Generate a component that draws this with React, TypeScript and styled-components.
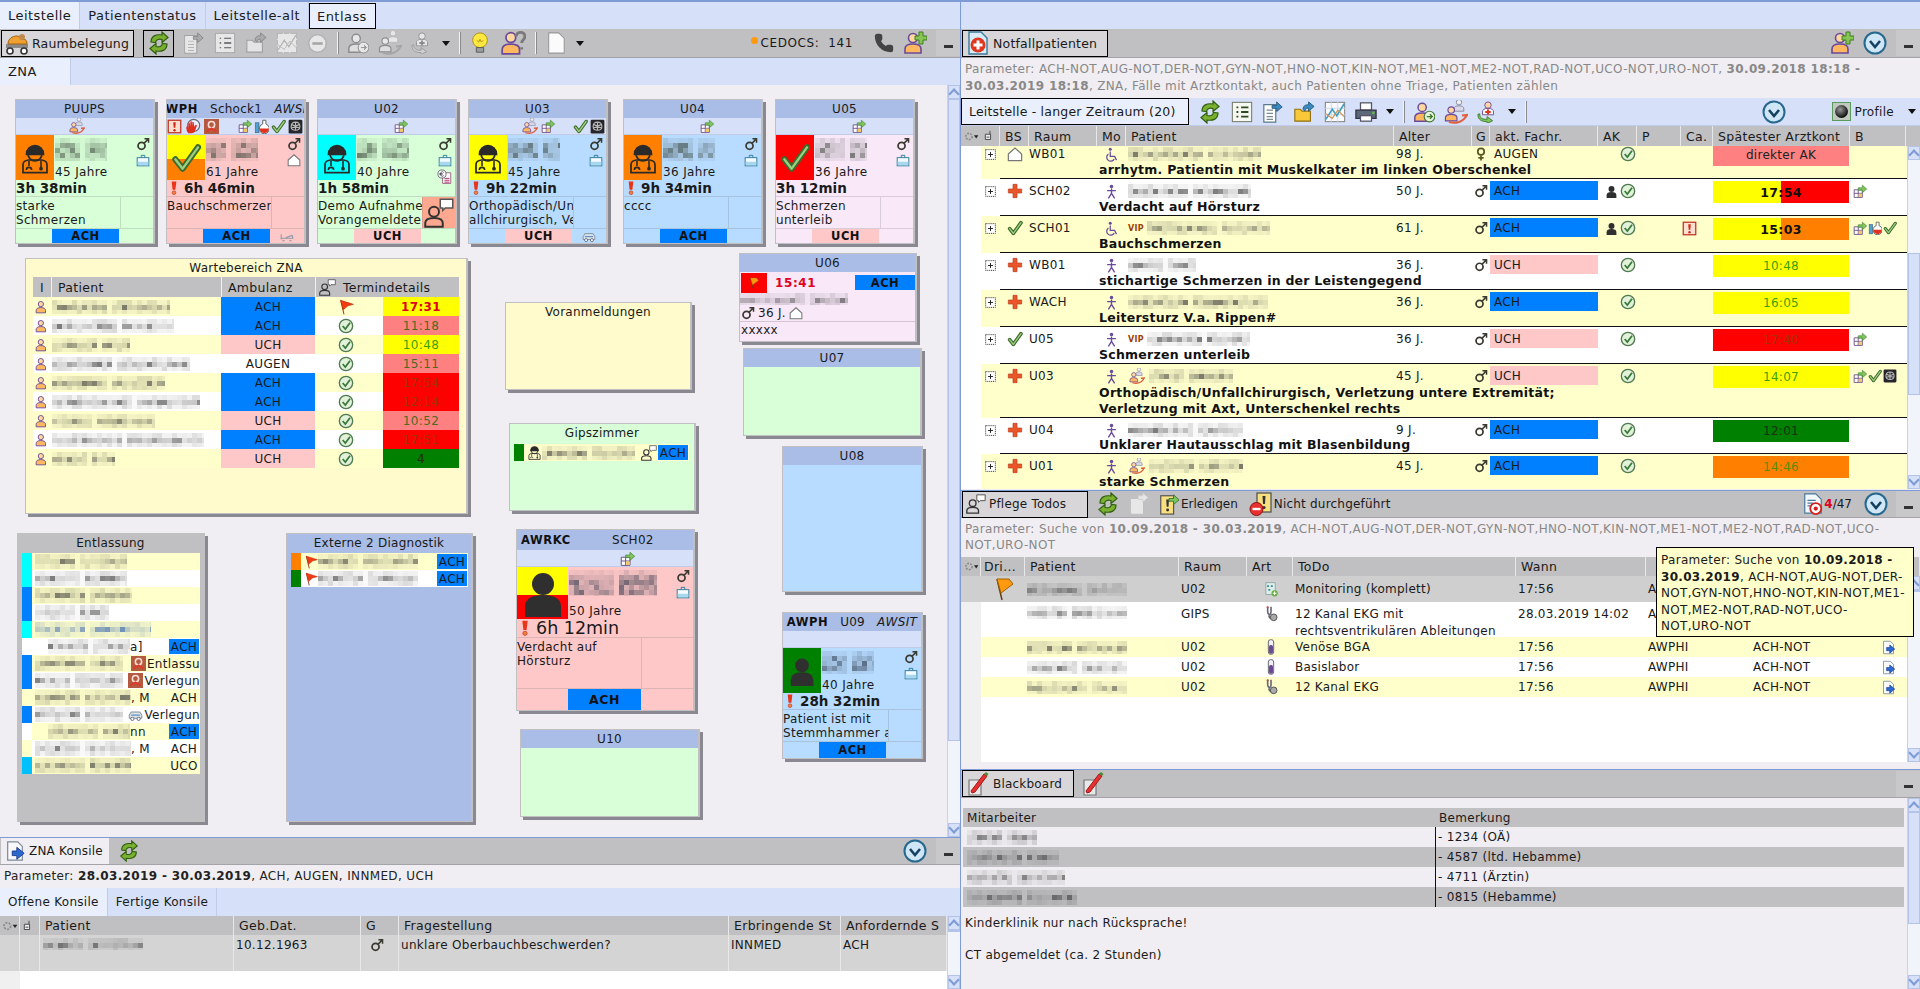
import React from 'react';
import styled, { createGlobalStyle } from 'styled-components';
import { Phone } from 'lucide-react';

const ACH = '#0080ff';
const PINK = '#ffc8c8';
const YEL = '#ffffcc';
const GREY = '#c0bfc2';
const BAND = '#a9bde6';
const PALE = '#d6e0f8';
const PAGE = '#f0eef2';

const Global = createGlobalStyle`
  html, body { margin: 0; padding: 0; height: 100%; overflow: hidden; background: ${PAGE}; }
  body, button { font-family: "DejaVu Sans", "Liberation Sans", sans-serif; font-size: 12px; color: #1a1a1a; }
  #root { height: 989px; width: 1920px; overflow: hidden; }
  * { box-sizing: border-box; }
`;

/* ---------- icons ---------- */
const person = (a = '#ffd8a0', b = '#ffb860', c = '#6a4a9a') => (
  <>
    <circle cx="10" cy="7" r="4.5" fill={a} stroke={c} strokeWidth="1.6" />
    <path d="M2 22v-4q0-5 8-5t8 5v4z" fill={b} stroke={c} strokeWidth="1.6" />
  </>
);
const gthick = (d: string, w = 5.5) => (
  <>
    <path d={d} fill="none" stroke="#3f6a2c" strokeWidth={w} strokeLinecap="round" strokeLinejoin="round" />
    <path d={d} fill="none" stroke="#9ad080" strokeWidth={w / 2.6} strokeLinecap="round" strokeLinejoin="round" />
  </>
);
const docBase = (
  <path d="M4 2h11l5 5v15H4z" fill="#f8f8f8" stroke="#7a8a9a" strokeWidth="1.3" />
);

const ICONS: Record<string, React.ReactNode> = {
  male: (
    <>
      <circle cx="9.5" cy="15" r="6" fill="none" stroke="#3a3a30" strokeWidth="3" />
      <path d="M14 10.5 21 3.5M14.5 3h7v7" fill="none" stroke="#3a3a30" strokeWidth="2.6" />
    </>
  ),
  female: (
    <>
      <circle cx="12" cy="8" r="5.5" fill="none" stroke="#5a5a20" strokeWidth="3" />
      <path d="M12 14v9M7.5 18.5h9" fill="none" stroke="#5a5a20" strokeWidth="3" />
    </>
  ),
  bag: (
    <>
      <path d="M9 8V4h6v4" fill="none" stroke="#2a7a9a" strokeWidth="1.6" />
      <rect x="2" y="8" width="20" height="14" fill="#f4fbff" stroke="#2a7a9a" strokeWidth="1.6" />
      <rect x="3" y="15" width="18" height="6" fill="#a8d8f0" />
    </>
  ),
  house: <path d="M2 12 12 3l10 9v10H2z" fill="#fff" stroke="#777" strokeWidth="1.8" />,
  check: gthick('M4 13l5.5 7L21 4'),
  bigcheck: gthick('M4 13l5.5 7L21 4', 4.6),
  okc: (
    <>
      <circle cx="12" cy="12" r="10" fill="#e2f2da" stroke="#4f7a4f" strokeWidth="2" />
      <path d="M7 12l4 4.5L18 7" fill="none" stroke="#3a7a3a" strokeWidth="2.6" />
    </>
  ),
  cross: <path d="M9 2h6v7h7v6h-7v7H9v-7H2V9h7z" fill="#e8562a" stroke="#c03a18" strokeWidth="1" />,
  walk: (
    <>
      <circle cx="12" cy="4" r="2.8" fill="#6a4a9a" />
      <path d="M12 7v8M5 10.5h14M12 15l-5 8M12 15l5 8" fill="none" stroke="#6a4a9a" strokeWidth="2.2" />
    </>
  ),
  wheel: (
    <>
      <circle cx="10" cy="3.5" r="2.4" fill="#6a4a9a" />
      <path d="M10 7v8h7l3 6M7 11a6.5 6.5 0 1 0 9.5 8.5" fill="none" stroke="#6a4a9a" strokeWidth="2" />
    </>
  ),
  flag: (
    <>
      <path d="M4 2l5 21" stroke="#a03010" strokeWidth="1.5" />
      <path d="M4 2l19 6-8 2-7 6z" fill="#f03c10" stroke="#c02808" />
    </>
  ),
  flago: (
    <>
      <path d="M5 2l5 21" stroke="#604010" strokeWidth="1.5" />
      <path d="M5 2h12l4 5-12 9z" fill="#ff9a10" stroke="#a06000" />
    </>
  ),
  exbox: (
    <>
      <rect x="2" y="2" width="20" height="20" fill="#ffe0d0" stroke="#c03020" strokeWidth="2" />
      <path d="M10 5h4l-.7 9h-2.6z" fill="#d02818" />
      <circle cx="12" cy="18" r="1.9" fill="#d02818" />
    </>
  ),
  ex: (
    <>
      <path d="M8 1h8l-1.6 14H9.600z" fill="#e83418" />
      <circle cx="12" cy="20" r="3.2" fill="#f08040" stroke="#c03020" />
    </>
  ),
  gift: (
    <>
      <path d="M2 10h14v13H2z" fill="#fff" stroke="#6a4a8a" strokeWidth="1.5" />
      <path d="M2 16h14M9 10v13" stroke="#6a4a8a" strokeWidth="1.5" />
      <path d="M9.800 16.500h5.500v5.800H9.800z" fill="#f0c860" />
      <path d="M9 6.500h7V2l7.500 6.500L16 15v-4.500H9z" fill="#80c460" stroke="#3a7a2a" />
    </>
  ),
  flask: (
    <>
      <rect x="2" y="6" width="6" height="16" fill="#50a0d0" stroke="#406080" />
      <path d="M14 2h5v6a8 8 0 1 1-5 0z" fill="#fff" stroke="#555" strokeWidth="1.4" />
      <path d="M9 15h15a7 7 0 0 1-15 0z" fill="#e03020" />
    </>
  ),
  xray: (
    <>
      <rect x="1" y="1" width="22" height="22" rx="2" fill="#26262a" />
      <path d="M12 5c-5 0-7 3-7 7 0 3 2 6 7 6s7-3 7-6c0-4-2-7-7-7zM12 5v13M6 9l5 2M18 9l-5 2M6 14l5-1M18 14l-5-1" fill="none" stroke="#b8b8b8" strokeWidth="1.8" />
    </>
  ),
  hand: (
    <>
      <circle cx="13" cy="11" r="9" fill="#eef" stroke="#667" strokeWidth="1.8" />
      <path d="M5 23c-3-3-3-7-3-10l2-1 1 3V7l2 0 1 5V5h2l1 7V6h2l1 7 2-3 2 1-3 9c-1 2-3 3-5 3z" fill="#e03020" />
    </>
  ),
  hurt: (
    <>
      <rect x="0" y="0" width="24" height="24" fill="#b45a40" />
      <circle cx="12" cy="9" r="5" fill="none" stroke="#ffe0d8" strokeWidth="2.5" />
      <path d="M4 20l8-5 8 5" fill="none" stroke="#e03828" strokeWidth="3" />
    </>
  ),
  bed: <path d="M2 9v9M2 16h20l-1-5-6 2-5 2M4 20h4M16 20h4" fill="none" stroke="#8a9aa8" strokeWidth="1.8" />,
  amb: (
    <>
      <path d="M2 18v-5l3-5h14l3 5v5z" fill="#dce4ea" stroke="#7a8a98" strokeWidth="1.5" />
      <path d="M5 13h14" stroke="#6090c0" strokeWidth="2" />
      <circle cx="7" cy="19" r="2.6" fill="#fff" stroke="#667" strokeWidth="1.5" />
      <circle cx="17" cy="19" r="2.6" fill="#fff" stroke="#667" strokeWidth="1.5" />
    </>
  ),
  euro: (
    <>
      <path d="M9 6h13v17H9z" fill="#fff" stroke="#8a3a6a" strokeWidth="1.2" />
      <path d="M12 15h8M12 18h8M12 21h8" stroke="#a02050" strokeWidth="1.4" />
      <circle cx="8" cy="8" r="6.500" fill="#fff" stroke="#556" strokeWidth="1.3" />
      <path d="M11 5.500a3.500 3.500 0 1 0 0 5M4 7.200h5M4 9h5" fill="none" stroke="#334" strokeWidth="1.1" />
    </>
  ),
  talk: (
    <>
      <circle cx="8" cy="11" r="4" fill="none" stroke="#333" strokeWidth="1.6" />
      <path d="M1 23v-3q0-4 7-4t7 4v3z" fill="none" stroke="#333" strokeWidth="1.6" />
      <path d="M13 1h10v7h-6l-2 2V8h-2z" fill="#fff" stroke="#555" strokeWidth="1.2" />
    </>
  ),
  doctor: (
    <>
      <path d="M5 9a7 7 0 0 1 14 0v1H5z" fill="#2a2a2a" />
      <circle cx="12" cy="9" r="5.200" fill="none" stroke="#2a2a2a" strokeWidth="1.3" />
      <path d="M3 23v-6q0-3 4-3.500h10q4 .5 4 3.500v6z" fill="none" stroke="#2a2a2a" strokeWidth="1.3" />
      <path d="M7.500 14v4M16.500 14v5M5.500 21a2 2 0 0 1 4 0" fill="none" stroke="#2a2a2a" strokeWidth="1.2" />
      <circle cx="16.500" cy="20" r="1.400" fill="#2a2a2a" />
    </>
  ),
  sil: (
    <>
      <circle cx="12" cy="7.500" r="5.500" fill="#2f2f2f" />
      <path d="M3 24v-5q0-6 9-6t9 6v5z" fill="#2f2f2f" />
    </>
  ),
  person: person(),
  personplus: (
    <>
      {person()}
      <path d="M14 6h4V2h4v4h4v4h-4v4h-4v-4h-4z" transform="translate(-2 -1)" fill="#86c454" stroke="#3f7f20" />
    </>
  ),
  personq: (
    <>
      {person()}
      <path d="M15 6c0-5 8-5 8 0 0 3-3 3-3 6M20 16v2" fill="none" stroke="#7a7a7a" strokeWidth="2.6" />
    </>
  ),
  personarrow: (
    <>
      {person()}
      <circle cx="18" cy="17" r="5.800" fill="#e4f4dc" stroke="#4a7a3a" strokeWidth="1.3" />
      <path d="M15 17h6M18.500 14.500 21 17l-2.500 2.500" fill="none" stroke="#3a7a2a" strokeWidth="1.5" />
    </>
  ),
  people: (
    <>
      <g transform="translate(9 -2) scale(.6)">{person('#f0f0f0', '#d8d8e8', '#8a8aa0')}</g>
      <g transform="translate(0 5) scale(.72)">{person()}</g>
      <path d="M5 22c7 2 14 0 18-7l-5 .5" fill="none" stroke="#e06040" strokeWidth="2.2" />
    </>
  ),
  docperson: (
    <>
      <circle cx="12" cy="4.500" r="3.500" fill="#ffd8a0" stroke="#6a4a9a" />
      <path d="M6 15v-3q0-4 6-4t6 4v3z" fill="#fff" stroke="#6a4a9a" />
      <path d="M11 9h2v2h2v2h-2v2h-2v-2H9v-2h2z" fill="#e03020" />
      <path d="M3 14c0 5 3 6 8 6v-3l6 4.500-6 3v-2c-6 0-10-2-10-8z" fill="#80c460" stroke="#3a7a2a" />
    </>
  ),
  bulb: (
    <>
      <circle cx="12" cy="9" r="8" fill="#ffe840" stroke="#a89010" />
      <path d="M8.500 9l2 2 1.500-3 1.500 3 2-2" fill="none" stroke="#b08a10" />
      <path d="M8 17h8v5H8z" fill="#9aa0a0" stroke="#555" />
    </>
  ),
  page: <path d="M4 1h11l6 6v16H4z" fill="#fbfbfb" stroke="#9a9a9a" strokeWidth="1.2" />,
  minus: (
    <>
      <circle cx="12" cy="12" r="10" fill="#e8e8e8" stroke="#8a8a8a" strokeWidth="2" />
      <path d="M6 12h12" stroke="#777" strokeWidth="3" />
    </>
  ),
  down: (
    <>
      <circle cx="12" cy="12" r="10.500" fill="#cfe6f6" stroke="#26688e" strokeWidth="2" />
      <path d="M7 10l5 6 5-6" fill="none" stroke="#14405f" strokeWidth="2.6" />
    </>
  ),
  bedroom: (
    <>
      <path d="M1 13h22v4H1z" fill="#8a8a8a" />
      <path d="M3 13c0-5 4-8 9-8 3 0 4 3 6 3 3 0 4 2 4 5z" fill="#f0a030" stroke="#a06010" />
      <circle cx="17" cy="6" r="3" fill="#c08a50" />
      <circle cx="5" cy="20" r="3" fill="#fff" stroke="#333" strokeWidth="1.6" />
      <circle cx="19" cy="20" r="3" fill="#fff" stroke="#333" strokeWidth="1.6" />
    </>
  ),
  refresh: (
    <>
      <path d="M4 11C4 5 9 3 15 4V1l6 5.500-6 5V8.500c-3-1-6 0-6.500 3z" fill="#7ab030" stroke="#2f5f10" strokeWidth="1.2" />
      <path d="M20 13c0 6-5 8-11 7v3l-6-5.500 6-5v3c3 1 6 0 6.500-3z" fill="#7ab030" stroke="#2f5f10" strokeWidth="1.2" />
    </>
  ),
  docarrow: (
    <>
      <path d="M2 4h13v19H2z" fill="#fff" stroke="#5a7a8a" strokeWidth="1.3" />
      <path d="M5 10h7M5 13.500h7M5 17h7M5 20h7" stroke="#7a8a90" strokeWidth="1.3" />
      <path d="M11 5h5V1l6 5.500-6 5V8h-5z" fill="#3a8ac0" stroke="#2a5a80" />
    </>
  ),
  list: (
    <>
      <rect x="1.500" y="1.500" width="21" height="21" fill="#f6f8f2" stroke="#7a8070" strokeWidth="1.2" />
      <path d="M6 7h2M11 7h8M6 12h2M11 12h8M6 17h2M11 17h8" stroke="#2f4a20" strokeWidth="2" />
    </>
  ),
  folder: (
    <>
      <path d="M2 22V9h6l2 2h9v11z" fill="#f8c838" stroke="#907010" strokeWidth="1.2" />
      <path d="M11 9c0-4 3-5 6-5V1l6 5-6 5V8c-2 0-4 0-4 3z" fill="#3a8ac0" stroke="#205a80" />
    </>
  ),
  chart: (
    <>
      <rect x="1.500" y="1.500" width="21" height="21" fill="#fbfbff" stroke="#8a8a8a" strokeWidth="1.200" />
      <path d="M1 8h22M1 15h22M8 1v22M15 1v22" stroke="#c8d8e8" />
      <path d="M2 20 9 9l5 7 8-13" fill="none" stroke="#40a0c0" strokeWidth="1.800" />
      <path d="M2 14l7 5 6-9 7 7" fill="none" stroke="#d09050" strokeWidth="1.300" />
    </>
  ),
  print: (
    <>
      <rect x="6" y="2" width="12" height="8" fill="#fff" stroke="#556" strokeWidth="1.400" />
      <path d="M1 10h22v9H1z" fill="#5a6878" stroke="#334" strokeWidth="1.400" />
      <rect x="6" y="16" width="12" height="6" fill="#fff" stroke="#556" strokeWidth="1.400" />
      <circle cx="20" cy="13" r="1.500" fill="#60c040" />
    </>
  ),
  doccross: (
    <>
      <path d="M3 1h12l6 6v16H3z" fill="#d8ecf8" stroke="#3a7a9a" strokeWidth="1.400" />
      <circle cx="12" cy="14" r="7.500" fill="#e03820" />
      <path d="M10.500 9.500h3v3h3v3h-3v3h-3v-3h-3v-3h3z" fill="#fff" />
    </>
  ),
  docblue: (
    <>
      {docBase}
      <path d="M9 12h5V8l8 6.500-8 6.500v-4H9z" fill="#2a6ad0" stroke="#1a3a90" />
    </>
  ),
  pencil: (
    <>
      <path d="M3 8h12v15H3z" fill="#e8e8e8" stroke="#777" strokeWidth="1.200" />
      <path d="M5 19l1 2 3-1L21 4l-3-2z" fill="#e83030" stroke="#a01818" />
      <path d="M18 2l3 2 1.500-2-2.500-2z" fill="#4a8a30" />
    </>
  ),
  clip: (
    <>
      <path d="M3 6h14v17H3z" fill="#e8e8e8" stroke="#999" strokeWidth="1.300" />
      <path d="M11 3h5V0l6 5-6 5V7h-5z" fill="#ccc" stroke="#aaa" />
    </>
  ),
  okyellow: (
    <>
      <rect x="3" y="3" width="14" height="20" fill="#f8e080" stroke="#555" strokeWidth="1.300" />
      <path d="M9 7h3l-.5 8h-2z" fill="#333" />
      <circle cx="10.500" cy="18.500" r="1.600" fill="#333" />
      <path d="M12 6h5V2l6 5.500-6 5V9h-5z" fill="#80c460" stroke="#3a7a2a" />
    </>
  ),
  stopyellow: (
    <>
      <rect x="8" y="1" width="14" height="19" fill="#f8e080" stroke="#555" strokeWidth="1.300" />
      <path d="M13.500 4h3l-.5 8h-2z" fill="#333" />
      <circle cx="15" cy="15.500" r="1.600" fill="#333" />
      <circle cx="7.500" cy="17" r="6.500" fill="#e83030" stroke="#901010" />
      <path d="M3.500 17h8" stroke="#fff" strokeWidth="2.400" />
    </>
  ),
  doctarget: (
    <>
      <path d="M3 1h12l6 6v15H3z" fill="#f4f8fc" stroke="#4a7a9a" strokeWidth="1.300" />
      <path d="M6 8h9M6 11h6M6 14h4" stroke="#4a7a9a" strokeWidth="1.300" />
      <circle cx="15" cy="17" r="6" fill="#fff" stroke="#d02020" strokeWidth="2" />
      <circle cx="15" cy="17" r="2.300" fill="#d02020" />
    </>
  ),
  monitor: (
    <>
      <path d="M3 1h15v19H3z" fill="#dceee8" stroke="#7a8a90" />
      <path d="M5 5h3v3H5zM11 5h3v3h-3zM7 11h3v3H7z" fill="#3a8a90" />
      <circle cx="17" cy="18" r="5" fill="#60b040" />
      <path d="M14 18h6M17 15v6" stroke="#fff" strokeWidth="1.600" />
    </>
  ),
  stetho: (
    <>
      <path d="M7 1v7c0 6 5 6 5 1V1M9 14c0 6 6 6 6 2" fill="none" stroke="#667" strokeWidth="2.400" />
      <circle cx="16" cy="17" r="5" fill="#aaa" stroke="#555" strokeWidth="1.500" />
      <circle cx="7" cy="2" r="1.600" fill="#d04030" />
    </>
  ),
  tube: (
    <>
      <rect x="8" y="1" width="8" height="22" rx="3.500" fill="#f0f0f4" stroke="#556" strokeWidth="1.300" />
      <rect x="9" y="9" width="6" height="13" rx="2.500" fill="#6a4a90" />
    </>
  ),
  gear: (
    <>
      <circle cx="8" cy="12" r="5" fill="none" stroke="#8a8a8a" strokeWidth="2.500" strokeDasharray="3 2" />
      <path d="M16 10h7l-3.500 5z" fill="#222" />
    </>
  ),
  expand: (
    <>
      <rect x="3" y="3" width="18" height="18" fill="#fff" stroke="#444" strokeWidth="1.800" strokeDasharray="2 1.500" />
      <path d="M7.500 12h9M12 7.500v9" stroke="#222" strokeWidth="1.800" />
    </>
  ),
  tree: <path d="M4 9h9v9H4zM12 3v6M6 14h5" fill="#eee" stroke="#444" strokeWidth="1.600" />,
};

const SvgBox = styled.svg<{ $off?: boolean }>`
  flex-shrink: 0;
  display: block;
  ${(p) => p.$off && 'filter: grayscale(1) brightness(1.25) opacity(.62);'}
`;

const Icon = ({ n, s = 16, off }: { n: string; s?: number; off?: boolean }) => (
  <SvgBox width={s} height={s} viewBox="0 0 24 24" $off={off}>
    {ICONS[n]}
  </SvgBox>
);

// pixelated anonymised name block
const Blur = ({ w, h = 14, seed = 1, cell = 5, tint = '50,50,50' }: { w: number; h?: number; seed?: number; cell?: number; tint?: string }) => {
  let r = seed * 7919 + 13;
  const rnd = () => {
    r = (r * 1103515245 + 12345) & 0x7fffffff;
    return (r >> 8) / 0x7fffff;
  };
  const cols = Math.ceil(w / cell);
  const rows = Math.ceil(h / cell);
  const gap = Math.floor(cols * (0.42 + rnd() * 0.2));
  const cells: React.ReactNode[] = [];
  for (let y = 0; y < rows; y++) {
    for (let x = 0; x < cols; x++) {
      const mid = y > 0 && y < rows - 1;
      const v = rnd();
      let a = (mid || rows < 3 ? 0.14 : 0.06) + v * v * (mid || rows < 3 ? 0.5 : 0.12);
      if (x === gap) a = 0.03;
      cells.push(<rect key={`${x}-${y}`} x={x * cell} y={y * cell} width={cell} height={cell} fill={`rgba(${tint},${a.toFixed(2)})`} />);
    }
  }
  return (
    <SvgBox width={w} height={h} shapeRendering="crispEdges">
      {cells}
    </SvgBox>
  );
};

/* ---------- page frame ---------- */
const Shell = styled.div`
  width: 1920px;
  height: 989px;
  border-top: 2px solid #7f9bd6;
  display: flex;
`;
const LeftCol = styled.div`
  width: 961px;
  display: flex;
  flex-direction: column;
  border-right: 1px solid #7f9bd6;
`;
const RightCol = styled.div`
  width: 959px;
  display: flex;
  flex-direction: column;
`;
const TabStrip = styled.div`
  height: 27px;
  background: ${PALE};
  display: flex;
  flex-shrink: 0;
`;
const Tab = styled.div<{ $state?: 'on' | 'focus' }>`
  display: flex;
  align-items: center;
  padding: 0 8px;
  font-size: 13px;
  letter-spacing: 0.45px;
  border-right: 1px solid #c0cce8;
  background: ${(p) => (p.$state ? '#e9effc' : PALE)};
  ${(p) => p.$state === 'focus' && 'outline: 1px solid #000; outline-offset: -1px; margin-top: 1px;'}
`;
const Toolbar = styled.div<{ $pale?: boolean; $h?: number }>`
  height: ${(p) => p.$h ?? 29}px;
  flex-shrink: 0;
  display: flex;
  align-items: center;
  gap: 9px;
  background: ${(p) => (p.$pale ? PALE : GREY)};
  border-bottom: 1px solid ${(p) => (p.$pale ? '#c0cce8' : '#a4a4a8')};
  padding-left: 1px;
`;
const Chip = styled.div<{ $wide?: number; $pale?: boolean }>`
  height: 27px;
  width: ${(p) => (p.$wide ? `${p.$wide}px` : 'auto')};
  display: flex;
  align-items: center;
  gap: 3px;
  padding: 0 6px 0 3px;
  font-size: 12.500px;
  letter-spacing: 0.2px;
  border: 1px solid #000;
  background: ${(p) => (p.$pale ? '#e9effc' : '#d8d6d8')};
`;
const RefreshBox = styled.div`
  width: 31px;
  height: 27px;
  display: flex;
  align-items: center;
  justify-content: center;
  border: 1px solid #000;
`;
const ToolSep = styled.div`
  width: 1px;
  height: 22px;
  background: #f4f4f4;
  box-shadow: 1px 0 0 #8a8a8a;
`;
const Caret = styled.div`
  width: 0;
  height: 0;
  border: 4px solid transparent;
  border-top: 5px solid #111;
  border-bottom: 0;
`;
const Fill = styled.div`
  flex: 1;
`;
const MinBtn = styled.div`
  width: 24px;
  height: 26px;
  background: #c8c8ca;
  display: flex;
  align-items: center;
  justify-content: center;
  padding-top: 6px;
  &::before {
    content: '';
    width: 9px;
    height: 3px;
    background: #333;
  }
`;
const Counter = styled.span`
  font-size: 12px;
  letter-spacing: 0.6px;
`;
const Dot = styled.span`
  width: 7px;
  height: 7px;
  border-radius: 50%;
  background: #ff9a10;
  margin: 0 -6px 5px 0;
`;
const ParamLine = styled.div<{ $h: number; $dim?: boolean }>`
  height: ${(p) => p.$h}px;
  flex-shrink: 0;
  padding: 3px 4px 0;
  font-size: 12px;
  line-height: 16.500px;
  letter-spacing: 0.35px;
  color: ${(p) => (p.$dim ? '#888' : '#222')};
  b { font-weight: bold; }
`;

/* ---------- scrollbars ---------- */
const Scroll = styled.div<{ $top: number; $len: number; $w?: number }>`
  width: ${(p) => p.$w ?? 13}px;
  flex-shrink: 0;
  display: flex;
  flex-direction: column;
  background: #f2f4fb;
  border-left: 1px solid #c8d2ec;
  &::before {
    content: '';
    display: block;
    margin-top: ${(p) => p.$top}px;
    height: ${(p) => p.$len}px;
    background: ${PALE};
    border: 1px solid #b4c4e8;
    order: 1;
  }
`;
const ScrollBtn = styled.div<{ $dir: 'up' | 'down' }>`
  height: 14px;
  flex-shrink: 0;
  background: ${PALE};
  border: 1px solid #b4c4e8;
  order: ${(p) => (p.$dir === 'up' ? 0 : 2)};
  margin-top: ${(p) => (p.$dir === 'up' ? 0 : 'auto')};
  display: flex;
  align-items: center;
  justify-content: center;
  &::after {
    content: '';
    width: 6px;
    height: 6px;
    border-left: 2px solid #7f9bd6;
    border-top: 2px solid #7f9bd6;
    transform: ${(p) => (p.$dir === 'up' ? 'translateY(2px) rotate(45deg)' : 'translateY(-2px) rotate(225deg)')};
  }
`;
const VScroll = ({ top = 0, len = 0 }: { top?: number; len?: number }) => (
  <Scroll $top={top} $len={len}>
    <ScrollBtn $dir="up" />
    <ScrollBtn $dir="down" />
  </Scroll>
);

/* ---------- floor plan ---------- */
const Floor = styled.div`
  height: 752px;
  display: flex;
  background: ${PAGE};
  flex-shrink: 0;
`;
const Plan = styled.div`
  position: relative;
  flex: 1;
`;
const Room = styled.div<{ $x: number; $y: number; $w: number; $h: number; $bg: string }>`
  position: absolute;
  left: ${(p) => p.$x}px;
  top: ${(p) => p.$y - 86}px;
  width: ${(p) => p.$w}px;
  height: ${(p) => p.$h}px;
  background: ${(p) => p.$bg};
  border: 1px solid ${GREY};
  border-right-width: 2px;
  box-shadow: 3px 3px 0 #8a8890;
  display: flex;
  flex-direction: column;
  overflow: hidden;
`;
const RoomTitle = styled.div<{ $band?: boolean; $h?: number }>`
  height: ${(p) => p.$h ?? 18}px;
  flex-shrink: 0;
  background: ${(p) => (p.$band ? BAND : 'transparent')};
  display: flex;
  align-items: center;
  justify-content: center;
  padding: 0 4px;
  letter-spacing: 0.25px;
  gap: 6px;
`;
const Sign = styled.b`
  font-size: 11.500px;
  letter-spacing: 0.6px;
  font-weight: bold;
  color: #111;
`;
const Tag = styled.i`
  letter-spacing: 0.4px;
`;
const IconStrip = styled.div<{ $lead: number }>`
  height: 17px;
  flex-shrink: 0;
  background: ${PALE};
  display: flex;
  align-items: center;
  border-bottom: 1px solid #c0cce8;
  > :first-child {
    width: ${(p) => p.$lead}px;
  }
`;
const IconGroup = styled.div`
  display: flex;
  align-items: center;
  gap: 3px;
  flex-shrink: 0;
`;
const EndGroup = styled(IconGroup)`
  margin-left: auto;
  padding-right: 1px;
  gap: 2px;
`;
const PatientRow = styled.div<{ $h: number }>`
  height: ${(p) => p.$h}px;
  flex-shrink: 0;
  display: flex;
`;
const Photo = styled.div<{ $w: number; $a: string; $b?: string }>`
  width: ${(p) => p.$w}px;
  flex-shrink: 0;
  background: ${(p) => (p.$b ? `linear-gradient(${p.$a} 54%, ${p.$b} 54%)` : p.$a)};
  display: flex;
  align-items: center;
  justify-content: center;
`;
const Who = styled.div`
  flex: 1;
  min-width: 0;
  padding: 3px 0 0 1px;
  display: flex;
  flex-direction: column;
  justify-content: space-between;
`;
const Age = styled.div`
  letter-spacing: 0.35px;
  line-height: 14px;
  padding-bottom: 1px;
`;
const SexCol = styled.div`
  width: 17px;
  margin-right: 2px;
  padding-top: 2px;
  display: flex;
  flex-direction: column;
  gap: 2px;
  align-items: center;
`;
const Since = styled.div<{ $big?: boolean }>`
  height: ${(p) => (p.$big ? 19 : 17)}px;
  flex-shrink: 0;
  display: flex;
  align-items: center;
  gap: 3px;
  font-size: ${(p) => (p.$big ? 17.500 : 13.500)}px;
  font-weight: ${(p) => (p.$big ? 'normal' : 'bold')};
  border-bottom: 1px solid rgba(120, 120, 120, 0.25);
`;
const NoteRow = styled.div<{ $h: number; $side: number }>`
  height: ${(p) => p.$h}px;
  flex-shrink: 0;
  display: grid;
  grid-template-columns: 1fr ${(p) => p.$side}px;
  border-bottom: 1px solid rgba(120, 120, 120, 0.25);
`;
const Note = styled.div`
  white-space: pre;
  overflow: hidden;
  line-height: 14px;
  letter-spacing: 0.3px;
  padding-top: 2px;
`;
const Side = styled.div<{ $tone?: string }>`
  border-left: 1px solid rgba(120, 120, 120, 0.25);
  background: ${(p) => p.$tone ?? 'transparent'};
  display: flex;
  align-items: center;
  justify-content: center;
`;
const Foot = styled.div<{ $lead: number; $w: number }>`
  flex: 1;
  display: grid;
  grid-template-columns: ${(p) => p.$lead}px ${(p) => p.$w}px 1fr;
`;
const Dept = styled.b<{ $c: string; $size?: number }>`
  background: ${(p) => p.$c};
  font-size: ${(p) => p.$size ?? 11.500}px;
  letter-spacing: 0.5px;
  display: flex;
  align-items: center;
  justify-content: center;
  color: #111;
`;
const FootIcon = styled.div`
  display: flex;
  align-items: center;
  justify-content: center;
`;

type CardData = {
  x: number; y: number; w?: number; h?: number; title: string; sign?: string; tag?: string; bg: string; big?: boolean;
  lead?: React.ReactNode; mid?: React.ReactNode; end?: React.ReactNode;
  a: string; b?: string; glyph: string; seed: number; age: string; house?: boolean; euro?: boolean; late?: boolean; time: string; note: string;
  dept: string; deptBg: string; foot?: string; side?: React.ReactNode; sideTone?: string; thin?: boolean;
};

const Card = ({ d }: { d: CardData }) => {
  const big = d.big;
  return (
    <Room $x={d.x} $y={d.y} $w={d.w ?? 140} $h={d.h ?? 145} $bg={d.bg}>
      <RoomTitle $band $h={big ? 20 : 18}>
        {d.sign && <Sign>{d.sign}</Sign>}
        <Fill style={{ display: d.sign ? 'block' : 'none' }} />
        <span>{d.title}</span>
        <Fill style={{ display: d.tag || (d.sign && big) ? 'block' : 'none' }} />
        {d.tag && <Tag>{d.tag}</Tag>}
      </RoomTitle>
      <IconStrip $lead={big ? 103 : 53}>
        <IconGroup>{d.lead}</IconGroup>
        <IconGroup>{d.mid}</IconGroup>
        <EndGroup>{d.end}</EndGroup>
      </IconStrip>
      <PatientRow $h={big ? 52 : 45}>
        <Photo $w={big ? 51 : 38} $a={d.a} $b={d.b}>
          <Icon n={d.glyph} s={big ? 48 : d.glyph === 'sil' ? 30 : 32} />
        </Photo>
        <Who>
          <Blur w={big ? 88 : 52} h={big ? 26 : 23} seed={d.seed} cell={5} tint={d.glyph === 'sil' ? '40,50,70' : '50,60,50'} />
          <Age>{d.age}</Age>
        </Who>
        <SexCol>
          <Icon n="male" s={14} />
          <Icon n={d.house ? 'house' : 'bag'} s={14} />
          {d.euro && <Icon n="euro" s={15} />}
        </SexCol>
      </PatientRow>
      <Since $big={big}>
        {d.late && <Icon n="ex" s={big ? 16 : 14} />}
        {d.time}
      </Since>
      <NoteRow $h={big ? 51 : 32} $side={big ? 52 : 33}>
        <Note>{d.note}</Note>
        <Side $tone={d.sideTone}>{d.side}</Side>
      </NoteRow>
      <Foot $lead={big ? 51 : 36} $w={big ? 73 : 67}>
        <span />
        <Dept $c={d.deptBg} $size={big ? 12.500 : 11.500}>{d.dept}</Dept>
        <FootIcon>{d.foot && <Icon n={d.foot} s={14} />}</FootIcon>
      </Foot>
    </Room>
  );
};

const cards: CardData[] = [
  { x: 15, y: 100, title: 'PUUPS', bg: '#d8ffd8', mid: <Icon n="people" s={16} />, a: '#ff8000', glyph: 'doctor', seed: 3, age: '45 Jahre', time: '3h 38min', note: 'starke\nSchmerzen', dept: 'ACH', deptBg: ACH },
  { x: 166, y: 100, sign: 'AWPH', title: 'Schock1', tag: 'AWSIT', bg: PINK, lead: <><Icon n="exbox" s={15} /><Icon n="hand" s={16} /><Icon n="hurt" s={15} /></>, end: <><Icon n="gift" s={14} /><Icon n="flask" s={15} /><Icon n="check" s={15} /><Icon n="xray" s={15} /></>, a: '#ffff00', b: '#ff8000', glyph: 'bigcheck', seed: 5, age: '61 Jahre', house: true, late: true, time: '6h 46min', note: 'Bauchschmerzen', dept: 'ACH', deptBg: ACH, foot: 'bed' },
  { x: 317, y: 100, title: 'U02', bg: '#d8ffd8', mid: <><span style={{ width: 20 }} /><Icon n="gift" s={14} /></>, a: '#00ffff', glyph: 'doctor', seed: 8, age: '40 Jahre', euro: true, time: '1h 58min', note: 'Demo Aufnahme\nVorangemeldeter', dept: 'UCH', deptBg: PINK, side: <Icon n="talk" s={30} />, sideTone: '#ffa890' },
  { x: 468, y: 100, title: 'U03', bg: '#b8dcff', mid: <><Icon n="people" s={16} /><Icon n="gift" s={14} /></>, end: <><Icon n="check" s={15} /><Icon n="xray" s={15} /></>, a: '#ffff00', glyph: 'doctor', seed: 11, age: '45 Jahre', late: true, time: '9h 22min', note: 'Orthopädisch/Unf\nallchirurgisch, Ver', dept: 'UCH', deptBg: PINK, foot: 'amb' },
  { x: 623, y: 100, title: 'U04', bg: '#b8dcff', mid: <><span style={{ width: 20 }} /><Icon n="gift" s={14} /></>, a: '#ff8000', glyph: 'doctor', seed: 14, age: '36 Jahre', late: true, time: '9h 34min', note: 'cccc', dept: 'ACH', deptBg: ACH },
  { x: 775, y: 100, title: 'U05', bg: '#f8e8f8', mid: <><span style={{ width: 20 }} /><Icon n="gift" s={14} /></>, a: '#ff0000', glyph: 'bigcheck', seed: 17, age: '36 Jahre', time: '3h 12min', note: 'Schmerzen\nunterleib', dept: 'UCH', deptBg: PINK },
  { x: 516, y: 530, w: 179, h: 182, big: true, sign: 'AWRKC', title: 'SCH02', bg: PINK, mid: <Icon n="gift" s={15} />, a: '#ffff00', b: '#ff0000', glyph: 'sil', seed: 20, age: '50 Jahre', late: true, time: '6h 12min', note: 'Verdacht auf\nHörsturz', dept: 'ACH', deptBg: ACH },
  { x: 782, y: 613, w: 141, h: 147, sign: 'AWPH', title: 'U09', tag: 'AWSIT', bg: '#b8dcff', a: '#008000', glyph: 'sil', seed: 23, age: '40 Jahre', late: true, time: '28h 32min', note: 'Patient ist mit\nStemmhammer a', dept: 'ACH', deptBg: ACH },
];

/* waiting area */
const WaitGrid = styled.div`
  margin: 0 7px;
`;
const WaitRow = styled.div<{ $alt?: boolean; $head?: boolean }>`
  display: grid;
  grid-template-columns: 18px 170px 94px 23px 45px 76px;
  height: ${(p) => (p.$head ? 20 : 19)}px;
  background: ${(p) => (p.$head ? GREY : p.$alt ? '#fff' : YEL)};
  align-items: stretch;
  letter-spacing: 0.3px;
  font-size: ${(p) => (p.$head ? 12.500 : 12)}px;
`;
const WaitCell = styled.div<{ $c?: string; $center?: boolean; $line?: boolean }>`
  display: flex;
  align-items: center;
  min-width: 0;
  overflow: hidden;
  padding-left: ${(p) => (p.$center ? 0 : 2)}px;
  justify-content: ${(p) => (p.$center ? 'center' : 'flex-start')};
  background: ${(p) => p.$c ?? 'transparent'};
  ${(p) => p.$line && 'border-left: 1px solid #f0f0f0;'}
`;
const HeadSpan = styled.div`
  grid-column: 5 / -1;
  display: flex;
  align-items: center;
  padding-left: 6px;
  margin-left: -1px;
`;
const Clock = styled.div<{ $c: string; $ink: string; $bold?: boolean }>`
  background: ${(p) => p.$c};
  color: ${(p) => p.$ink};
  font-weight: ${(p) => (p.$bold ? 'bold' : 'normal')};
  display: flex;
  align-items: center;
  justify-content: center;
  letter-spacing: 0.4px;
`;

const waitRows = [
  { d: 'ACH', c: ACH, t: '17:31', bg: '#ffff00', ink: '#e00020', bold: true, flag: true, w: 118 },
  { d: 'ACH', c: ACH, t: '11:18', bg: '#ff8080', ink: '#4a6a20', w: 122 },
  { d: 'UCH', c: PINK, t: '10:48', bg: '#ffff00', ink: '#40a000', w: 78 },
  { d: 'AUGEN', c: 'transparent', t: '15:11', bg: '#ff8080', ink: '#4a6a20', w: 138 },
  { d: 'ACH', c: ACH, t: '17:54', bg: '#ff0000', ink: '#a83000', w: 113 },
  { d: 'ACH', c: ACH, t: '12:14', bg: '#ff0000', ink: '#a83000', w: 148 },
  { d: 'UCH', c: PINK, t: '10:52', bg: '#ff8080', ink: '#4a6a20', w: 103 },
  { d: 'ACH', c: ACH, t: '17:51', bg: '#ff0000', ink: '#a83000', w: 152 },
  { d: 'UCH', c: PINK, t: '4', bg: '#008000', ink: '#1e2e10', w: 63 },
];

/* side lists */
const SlotList = styled.div<{ $m: string }>`
  margin: ${(p) => p.$m};
  display: flex;
  flex-direction: column;
`;
const Slot = styled.div<{ $alt?: boolean; $tint?: string }>`
  height: 17px;
  display: flex;
  align-items: center;
  background: ${(p) => p.$tint ?? (p.$alt ? '#fff' : YEL)};
  letter-spacing: 0.3px;
  overflow: hidden;
`;
const Stripe = styled.div<{ $c?: string }>`
  width: 10px;
  height: 100%;
  flex-shrink: 0;
  margin-right: 3px;
  background: ${(p) => p.$c ?? 'transparent'};
`;
const SlotTail = styled.span`
  margin-left: auto;
  display: flex;
  align-items: center;
  gap: 1px;
  white-space: nowrap;
`;
const SlotDept = styled.div<{ $c?: string }>`
  width: 30px;
  height: 15px;
  margin-right: 1px;
  display: flex;
  align-items: center;
  justify-content: center;
  flex-shrink: 0;
  background: ${(p) => p.$c ?? 'transparent'};
`;

const MiniHead = styled.div`
  height: 21px;
  display: flex;
  align-items: center;
  gap: 8px;
`;
const MiniBody = styled.div`
  width: 140px;
  background: #f8e8f8;
  flex: 1;
  display: flex;
  flex-direction: column;
`;
const MiniWrap = styled.div`
  flex: 1;
  background: ${PALE};
  display: flex;
`;
const MiniRed = styled.div`
  width: 26px;
  height: 20px;
  margin-left: 1px;
  background: #ff0000;
  display: flex;
  align-items: center;
  justify-content: center;
`;
const MiniTime = styled.b`
  color: #e00020;
  letter-spacing: 0.6px;
  font-size: 12px;
`;
const MiniDept = styled(Dept)`
  width: 60px;
  height: 15px;
  margin-left: auto;
`;
const MiniMid = styled.div`
  height: 29px;
  border-bottom: 1px solid rgba(120, 120, 120, 0.3);
  overflow: hidden;
  display: flex;
  flex-direction: column;
`;
const MiniLine = styled.div`
  display: flex;
  align-items: center;
  gap: 3px;
  padding: 1px 0 0 1px;
  letter-spacing: 0.3px;
`;

/* ---------- tables ---------- */
const HeadRow = styled.div<{ $cols: string; $h?: number }>`
  display: grid;
  grid-template-columns: ${(p) => p.$cols};
  height: ${(p) => p.$h ?? 20}px;
  background: ${GREY};
  flex-shrink: 0;
  letter-spacing: 0.3px;
  font-size: 12.500px;
`;
const HeadCell = styled.div`
  display: flex;
  align-items: center;
  padding-left: 5px;
  border-right: 1px solid #e8e8e8;
  min-width: 0;
  overflow: hidden;
  white-space: nowrap;
`;
const BodyRegion = styled.div<{ $h: number }>`
  height: ${(p) => p.$h}px;
  display: flex;
  flex-shrink: 0;
  overflow: hidden;
`;
const BodyMain = styled.div`
  flex: 1;
  min-width: 0;
  overflow: hidden;
`;
const CaseRow = styled.div<{ $alt?: boolean; $h: number; $first?: boolean }>`
  display: grid;
  grid-template-columns: 20px 19px 29px 68px 29px 268px 78px 18px 108px 39px 44px 32px 137px 1fr;
  grid-template-rows: 18px 3px 1fr 1px;
  height: ${(p) => p.$h}px;
  padding-top: 3px;
  margin-top: ${(p) => (p.$first ? -4 : 0)}px;
  background: ${(p) => (p.$alt ? '#fff' : YEL)};
  letter-spacing: 0.3px;
`;
const Gutter = styled.div`
  grid-row: 1 / -1;
  grid-column: 1;
  background: #fff;
  margin-top: -3px;
`;
const CaseCell = styled.div<{ $center?: boolean; $pad?: number }>`
  grid-row: 1;
  display: flex;
  align-items: center;
  gap: 4px;
  min-width: 0;
  padding-left: ${(p) => p.$pad ?? 0}px;
  justify-content: ${(p) => (p.$center ? 'center' : 'flex-start')};
  white-space: nowrap;
`;
const CaseDept = styled.div<{ $c: string }>`
  grid-row: 1;
  grid-column: 9;
  margin-top: -1px;
  background: ${(p) => p.$c};
  padding-left: 4px;
  display: flex;
  align-items: center;
`;
const CaseTime = styled.div<{ $a: string; $b?: string; $ink: string; $bold?: boolean }>`
  grid-row: 1 / span 2;
  grid-column: 13;
  margin: -1px 1px 0 0;
  background: ${(p) => (p.$b ? `linear-gradient(90deg, ${p.$a} 50%, ${p.$b} 50%)` : p.$a)};
  color: ${(p) => p.$ink};
  font-weight: ${(p) => (p.$bold ? 'bold' : 'normal')};
  font-size: ${(p) => (p.$bold ? 12.500 : 12)}px;
  display: flex;
  align-items: center;
  justify-content: center;
  z-index: 1;
`;
const CaseNote = styled.div`
  grid-row: 2 / span 2;
  grid-column: 5 / -1;
  padding-left: 2px;
  font-weight: bold;
  font-size: 12.500px;
  line-height: 16px;
  letter-spacing: 0.25px;
  color: #111;
  white-space: pre;
  align-self: end;
`;
const CaseRule = styled.div`
  grid-row: 4;
  grid-column: 3 / -1;
  background: #111;
`;
const Vip = styled.span`
  font-size: 8px;
  font-weight: bold;
  color: #a04000;
  margin-right: -1px;
`;
const Profile = styled.div`
  display: flex;
  align-items: center;
  gap: 4px;
  letter-spacing: 0.3px;
  padding-right: 4px;
`;
const Ball = styled.div`
  width: 19px;
  height: 19px;
  border: 1px solid #5a9a5a;
  background: #c0c8c0;
  display: flex;
  align-items: center;
  justify-content: center;
  &::after {
    content: '';
    width: 13px;
    height: 13px;
    border-radius: 50%;
    background: radial-gradient(circle at 40% 35%, #999, #111 70%);
  }
`;
const caseCols = '39px 29px 68px 29px 268px 78px 18px 108px 39px 44px 32px 137px 56px';

type Case = {
  h: number; bs: string; raum: string; mo: string; vip?: boolean; extra?: boolean; seed: number; w: number; alter: string; female?: boolean; d: string; dc: string; doc?: boolean; ca?: boolean;
  t: string; a: string; b?: string; ink: string; bold?: boolean; note: string; icons?: string[]; first?: boolean;
};
const cases: Case[] = [
  { h: 37, first: true, bs: 'house', raum: 'WB01', mo: 'wheel', seed: 31, w: 133, alter: '98 J.', female: true, d: 'AUGEN', dc: 'transparent', t: 'direkter AK', a: '#ff8080', ink: '#222', note: 'arrhytm. Patientin mit Muskelkater im linken Oberschenkel' },
  { h: 37, bs: 'cross', raum: 'SCH02', mo: 'walk', seed: 33, w: 123, alter: '50 J.', d: 'ACH', dc: ACH, doc: true, t: '17:54', a: '#ffff00', b: '#ff0000', ink: '#111', bold: true, note: 'Verdacht auf Hörsturz', icons: ['gift'] },
  { h: 37, bs: 'check', raum: 'SCH01', mo: 'wheel', vip: true, seed: 35, w: 123, alter: '61 J.', d: 'ACH', dc: ACH, doc: true, ca: true, t: '15:03', a: '#ffff00', b: '#ff8000', ink: '#111', bold: true, note: 'Bauchschmerzen', icons: ['gift', 'flask', 'check'] },
  { h: 37, bs: 'cross', raum: 'WB01', mo: 'walk', seed: 37, w: 68, alter: '36 J.', d: 'UCH', dc: PINK, t: '10:48', a: '#ffff00', ink: '#40a000', note: 'stichartige Schmerzen in der Leistengegend' },
  { h: 37, bs: 'cross', raum: 'WACH', mo: 'walk', seed: 39, w: 140, alter: '36 J.', d: 'ACH', dc: ACH, t: '16:05', a: '#ffff00', ink: '#40a000', note: 'Leitersturz V.a. Rippen#' },
  { h: 37, bs: 'check', raum: 'U05', mo: 'walk', vip: true, seed: 41, w: 103, alter: '36 J.', d: 'UCH', dc: PINK, t: '17:40', a: '#ff0000', ink: '#a83000', note: 'Schmerzen unterleib', icons: ['gift'] },
  { h: 54, bs: 'cross', raum: 'U03', mo: 'walk', extra: true, seed: 43, w: 84, alter: '45 J.', d: 'UCH', dc: PINK, t: '14:07', a: '#ffff00', ink: '#40a000', note: 'Orthopädisch/Unfallchirurgisch, Verletzung untere Extremität;\nVerletzung mit Axt, Unterschenkel rechts', icons: ['gift', 'check', 'xray'] },
  { h: 36, bs: 'cross', raum: 'U04', mo: 'walk', seed: 45, w: 115, alter: '9 J.', d: 'ACH', dc: ACH, t: '12:01', a: '#008000', ink: '#1e2e10', note: 'Unklarer Hautausschlag mit Blasenbildung' },
  { h: 37, bs: 'cross', raum: 'U01', mo: 'walk', extra: true, seed: 47, w: 94, alter: '45 J.', d: 'ACH', dc: ACH, t: '14:46', a: '#ff8000', ink: '#5a8a00', note: 'starke Schmerzen' },
];

const todoCols = '20px 44px 154px 68px 46px 223px 130px 105px 116px 1fr';
const TodoArea = styled.div`
  flex: 1;
  display: flex;
  flex-direction: column;
  min-height: 0;
`;
const TodoRow = styled.div<{ $bg: string; $h: number }>`
  display: grid;
  grid-template-columns: ${todoCols};
  height: ${(p) => p.$h}px;
  background: ${(p) => p.$bg};
  flex-shrink: 0;
  letter-spacing: 0.25px;
`;
const TodoCell = styled.div<{ $top?: boolean; $center?: boolean; $pad?: number }>`
  display: flex;
  align-items: ${(p) => (p.$top ? 'flex-start' : 'center')};
  padding-top: ${(p) => (p.$top ? 4 : 0)}px;
  padding-left: ${(p) => p.$pad ?? 2}px;
  justify-content: ${(p) => (p.$center ? 'center' : 'flex-start')};
  line-height: 17px;
  min-width: 0;
  overflow: hidden;
  white-space: pre;
`;
const TodoGutter = styled.div<{ $c: string }>`
  background: ${(p) => p.$c};
`;
const TodoFill = styled.div`
  flex: 1;
  background: linear-gradient(90deg, #f0f0f0 20px, #fff 20px);
`;
const Tip = styled.div`
  position: absolute;
  left: 695px;
  top: 56px;
  width: 258px;
  height: 90px;
  background: #ffffcc;
  border: 1px solid #000;
  padding: 4px 3px 0 4px;
  font-size: 12px;
  line-height: 16.500px;
  letter-spacing: 0.3px;
  z-index: 3;
  b { font-weight: bold; }
`;
const PanelBody = styled.div`
  position: relative;
  flex: 1;
  display: flex;
  flex-direction: column;
  min-height: 0;
`;
const RedCount = styled.span`
  color: #e00020;
  font-weight: bold;
`;
const BoardArea = styled.div`
  flex: 1;
  display: flex;
  min-height: 0;
`;
const BoardMain = styled.div`
  flex: 1;
  padding: 10px 3px 0 2px;
  min-width: 0;
`;
const BoardRow = styled.div<{ $dark?: boolean; $head?: boolean }>`
  display: grid;
  grid-template-columns: 472px 1fr;
  height: ${(p) => (p.$head ? 19 : 20)}px;
  background: ${(p) => (p.$dark || p.$head ? GREY : PAGE)};
  letter-spacing: 0.3px;
`;
const BoardCell = styled.div<{ $rule?: boolean }>`
  display: flex;
  align-items: center;
  padding-left: ${(p) => (p.$rule ? 2 : 4)}px;
  ${(p) => p.$rule && 'border-left: 1px solid #111;'}
`;
const BoardNote = styled.p`
  margin: 0;
  padding: 0 0 0 2px;
  letter-spacing: 0.3px;
`;
const KonsileArea = styled.div`
  display: flex;
  flex: 1;
  min-height: 0;
`;
const konsCols = '20px 20px 194px 127px 38px 330px 112px 1fr';
const KonsRow = styled.div`
  display: grid;
  grid-template-columns: ${konsCols};
  height: 36px;
  background: #d4d4d4;
  letter-spacing: 0.3px;
`;
const KonsCell = styled.div`
  display: flex;
  align-items: flex-start;
  padding: 3px 0 0 2px;
  border-right: 1px solid #e8e8e8;
  min-width: 0;
  white-space: nowrap;
`;

const Refresh = () => <Icon n="refresh" s={24} />;

const App = () => (
  <>
    <Global />
    <Shell>
      <LeftCol>
        <TabStrip>
          <Tab $state="on">Leitstelle</Tab>
          <Tab>Patientenstatus</Tab>
          <Tab>Leitstelle-alt</Tab>
          <Tab $state="focus">Entlass</Tab>
        </TabStrip>
        <Toolbar>
          <Chip $wide={133}><Icon n="bedroom" s={24} />Raumbelegung</Chip>
          <RefreshBox><Refresh /></RefreshBox>
          <Icon n="docarrow" s={22} off />
          <Icon n="list" s={22} off />
          <Icon n="folder" s={22} off />
          <Icon n="chart" s={22} off />
          <Icon n="minus" s={21} off />
          <ToolSep />
          <Icon n="personarrow" s={22} off />
          <Icon n="people" s={24} off />
          <Icon n="docperson" s={22} off />
          <Caret />
          <ToolSep />
          <Icon n="bulb" s={22} />
          <Icon n="personq" s={26} />
          <ToolSep />
          <Icon n="page" s={22} />
          <Caret />
          <Fill />
          <Dot />
          <Counter>CEDOCS: &nbsp;141</Counter>
          <Phone size={20} fill="#444" stroke="#444" style={{ marginLeft: 12 }} />
          <Icon n="personplus" s={24} />
          <MinBtn />
        </Toolbar>
        <TabStrip>
          <Tab $state="on" style={{ width: 71 }}>ZNA</Tab>
        </TabStrip>
        <Floor>
          <Plan>
            {cards.map((d) => <Card key={d.title} d={d} />)}

            <Room $x={25} $y={259} $w={443} $h={256} $bg="#fffbcc">
              <RoomTitle $h={18}>Wartebereich ZNA</RoomTitle>
              <WaitGrid>
                <WaitRow $head>
                  <WaitCell $center>I</WaitCell>
                  <WaitCell $line style={{ paddingLeft: 6 }}>Patient</WaitCell>
                  <WaitCell $line style={{ paddingLeft: 6 }}>Ambulanz</WaitCell>
                  <WaitCell $line $center><Icon n="talk" s={17} /></WaitCell>
                  <HeadSpan>Termindetails</HeadSpan>
                </WaitRow>
                {waitRows.map((r, i) => (
                  <WaitRow key={i} $alt={i % 2 === 1}>
                    <WaitCell $center><Icon n="person" s={14} /></WaitCell>
                    <WaitCell style={{ paddingLeft: 1 }}><Blur w={r.w} h={14} seed={50 + i} /></WaitCell>
                    <WaitCell $center $c={r.c}>{r.d}</WaitCell>
                    <span />
                    <WaitCell $center style={{ justifyContent: 'flex-start', paddingLeft: 0 }}><Icon n={r.flag ? 'flag' : 'okc'} s={16} /></WaitCell>
                    <Clock $c={r.bg} $ink={r.ink} $bold={r.bold}>{r.t}</Clock>
                  </WaitRow>
                ))}
              </WaitGrid>
            </Room>

            <Room $x={505} $y={303} $w={187} $h={88} $bg="#fffbcc">
              <RoomTitle>Voranmeldungen</RoomTitle>
            </Room>

            <Room $x={509} $y={424} $w={187} $h={88} $bg="#d8ffd8">
              <RoomTitle>Gipszimmer</RoomTitle>
              <SlotList $m="2px 5px 0 4px">
                <Slot>
                  <Stripe $c="#008000" />
                  <Icon n="doctor" s={15} />
                  <Blur w={93} h={14} seed={71} />
                  <SlotTail><Icon n="talk" s={16} /><SlotDept $c={ACH}>ACH</SlotDept></SlotTail>
                </Slot>
              </SlotList>
            </Room>

            <Room $x={739} $y={254} $w={178} $h={89} $bg={PALE}>
              <RoomTitle $band $h={18}>U06</RoomTitle>
              <MiniWrap>
                <MiniBody>
                  <MiniHead>
                    <MiniRed><Icon n="flago" s={12} /></MiniRed>
                    <MiniTime>15:41</MiniTime>
                    <MiniDept $c={ACH}>ACH</MiniDept>
                  </MiniHead>
                  <MiniMid>
                    <Blur w={108} h={12} seed={73} />
                    <MiniLine><Icon n="male" s={14} />36 J. <Icon n="house" s={14} /></MiniLine>
                  </MiniMid>
                  <MiniLine>xxxxx</MiniLine>
                </MiniBody>
              </MiniWrap>
            </Room>

            <Room $x={743} $y={349} $w={179} $h={88} $bg="#d8ffd8">
              <RoomTitle $band>U07</RoomTitle>
            </Room>
            <Room $x={782} $y={447} $w={141} $h={146} $bg="#b8dcff">
              <RoomTitle $band>U08</RoomTitle>
            </Room>
            <Room $x={520} $y={730} $w={180} $h={88} $bg="#d8ffd8">
              <RoomTitle $band>U10</RoomTitle>
            </Room>

            <Room $x={17} $y={534} $w={188} $h={289} $bg={GREY}>
              <RoomTitle>Entlassung</RoomTitle>
              <SlotList $m="1px 3px 0 4px">
                <Slot><Stripe $c="#00ffff" /><Blur w={92} h={15} seed={80} /></Slot>
                <Slot $alt><Stripe $c="#00ffff" /><Blur w={92} h={15} seed={81} /></Slot>
                <Slot><Stripe $c={ACH} /><Blur w={97} h={15} seed={82} /></Slot>
                <Slot $alt><Stripe $c={ACH} /><Blur w={74} h={15} seed={83} /></Slot>
                <Slot><Stripe $c="#00ffff" /><Blur w={116} h={15} seed={84} tint="30,80,170" /></Slot>
                <Slot $alt><Stripe /><span style={{ width: 13 }} /><Blur w={82} h={15} seed={85} />a]<SlotTail><SlotDept $c={ACH}>ACH</SlotDept></SlotTail></Slot>
                <Slot><Stripe $c={ACH} /><Blur w={88} h={15} seed={86} /><SlotTail><Icon n="hurt" s={15} />Entlassu</SlotTail></Slot>
                <Slot $alt><Stripe $c={ACH} /><Blur w={88} h={15} seed={87} /><SlotTail><Icon n="hurt" s={15} />Verlegun</SlotTail></Slot>
                <Slot><Stripe /><Blur w={96} h={15} seed={88} />, M<SlotTail><SlotDept>ACH</SlotDept></SlotTail></Slot>
                <Slot $alt><Stripe $c={ACH} /><Blur w={88} h={15} seed={89} /><SlotTail><Icon n="amb" s={15} />Verlegun</SlotTail></Slot>
                <Slot><Stripe $c="#fff" /><span style={{ width: 13 }} /><Blur w={82} h={15} seed={90} />nn<SlotTail><SlotDept $c={ACH}>ACH</SlotDept></SlotTail></Slot>
                <Slot $alt><Stripe $c={YEL} /><Blur w={96} h={15} seed={91} />, M<SlotTail><SlotDept>ACH</SlotDept></SlotTail></Slot>
                <Slot><Stripe $c="#00c0ff" /><Blur w={96} h={15} seed={92} /><SlotTail><SlotDept>UCO</SlotDept></SlotTail></Slot>
              </SlotList>
            </Room>

            <Room $x={286} $y={534} $w={187} $h={289} $bg={BAND}>
              <RoomTitle>Externe 2 Diagnostik</RoomTitle>
              <SlotList $m="1px 3px 0 4px">
                <Slot><Stripe $c="#ff8000" /><Icon n="flag" s={14} /><Blur w={100} h={15} seed={94} /><SlotTail><SlotDept $c={ACH}>ACH</SlotDept></SlotTail></Slot>
                <Slot $alt><Stripe $c="#008000" /><Icon n="flag" s={14} /><Blur w={100} h={15} seed={95} /><SlotTail><SlotDept $c={ACH}>ACH</SlotDept></SlotTail></Slot>
              </SlotList>
            </Room>
          </Plan>
          <VScroll top={0} len={640} />
        </Floor>

        <Toolbar $h={28} style={{ borderTop: '1px solid #7f9bd6' }}>
          <Chip $pale style={{ height: 26, border: 0, background: PAGE, fontSize: 12 }}><Icon n="docblue" s={22} />ZNA Konsile</Chip>
          <Icon n="refresh" s={22} />
          <Fill />
          <Icon n="down" s={24} />
          <MinBtn />
        </Toolbar>
        <ParamLine $h={23}>Parameter: <b>28.03.2019 - 30.03.2019</b>, ACH, AUGEN, INNMED, UCH</ParamLine>
        <TabStrip style={{ height: 28 }}>
          <Tab $state="on" style={{ fontSize: 12, letterSpacing: '.3px' }}>Offene Konsile</Tab>
          <Tab style={{ fontSize: 12, letterSpacing: '.3px' }}>Fertige Konsile</Tab>
        </TabStrip>
        <KonsileArea>
          <BodyMain>
            <HeadRow $cols={konsCols} $h={19}>
              <HeadCell style={{ paddingLeft: 2 }}><Icon n="gear" s={16} /></HeadCell>
              <HeadCell style={{ paddingLeft: 2 }}><Icon n="tree" s={14} /></HeadCell>
              <HeadCell>Patient</HeadCell>
              <HeadCell>Geb.Dat.</HeadCell>
              <HeadCell>G</HeadCell>
              <HeadCell>Fragestellung</HeadCell>
              <HeadCell>Erbringende St</HeadCell>
              <HeadCell>Anfordernde S</HeadCell>
            </HeadRow>
            <KonsRow>
              <KonsCell />
              <KonsCell />
              <KonsCell style={{ paddingLeft: 3 }}><Blur w={100} h={12} seed={101} /></KonsCell>
              <KonsCell>10.12.1963</KonsCell>
              <KonsCell style={{ paddingLeft: 9 }}><Icon n="male" s={14} /></KonsCell>
              <KonsCell>unklare Oberbauchbeschwerden?</KonsCell>
              <KonsCell>INNMED</KonsCell>
              <KonsCell>ACH</KonsCell>
            </KonsRow>
            <TodoFill style={{ height: 20 }} />
          </BodyMain>
          <VScroll />
        </KonsileArea>
      </LeftCol>

      <RightCol>
        <PanelBody style={{ flex: '0 0 488px' }}>
          <TabStrip />
          <Toolbar>
            <Chip $wide={146}><Icon n="doccross" s={24} />Notfallpatienten</Chip>
            <Fill />
            <Icon n="personplus" s={24} />
            <Icon n="down" s={24} />
            <MinBtn />
          </Toolbar>
          <ParamLine $h={40} $dim>
            Parameter: ACH-NOT,AUG-NOT,DER-NOT,GYN-NOT,HNO-NOT,KIN-NOT,ME1-NOT,ME2-NOT,RAD-NOT,UCO-NOT,URO-NOT, <b>30.09.2018 18:18 - 30.03.2019 18:18</b>, ZNA, Fälle mit Arztkontakt, auch Patienten ohne Triage, Patienten zählen
          </ParamLine>
          <Toolbar $pale $h={28} style={{ padding: 0 }}>
            <Chip $pale $wide={228} style={{ paddingLeft: 7, fontSize: 12.500 }}>Leitstelle - langer Zeitraum (20)</Chip>
            <Refresh />
            <Icon n="list" s={22} />
            <Icon n="docarrow" s={22} />
            <Icon n="folder" s={22} />
            <Icon n="chart" s={22} />
            <Icon n="print" s={22} />
            <Caret />
            <ToolSep />
            <Icon n="personarrow" s={22} />
            <Icon n="people" s={24} />
            <Icon n="docperson" s={22} />
            <Caret />
            <ToolSep />
            <Fill />
            <Icon n="down" s={24} />
            <span style={{ width: 28 }} />
            <Profile><Ball />Profile<span style={{ width: 6 }} /><Caret /></Profile>
          </Toolbar>
          <HeadRow $cols={caseCols}>
            <HeadCell style={{ paddingLeft: 3, gap: 4, display: 'flex' }}><Icon n="gear" s={15} /><Icon n="tree" s={14} /></HeadCell>
            <HeadCell>BS</HeadCell>
            <HeadCell>Raum</HeadCell>
            <HeadCell>Mo</HeadCell>
            <HeadCell>Patient</HeadCell>
            <HeadCell>Alter</HeadCell>
            <HeadCell style={{ paddingLeft: 4 }}>G</HeadCell>
            <HeadCell>akt. Fachr.</HeadCell>
            <HeadCell>AK</HeadCell>
            <HeadCell>P</HeadCell>
            <HeadCell>Ca.</HeadCell>
            <HeadCell>Spätester Arztkont</HeadCell>
            <HeadCell>B</HeadCell>
          </HeadRow>
          <BodyRegion $h={343}>
            <BodyMain>
              {cases.map((c, i) => (
                <CaseRow key={i} $alt={i % 2 === 1 && i !== 6} $h={c.h} $first={c.first}>
                  <Gutter />
                  <CaseCell style={{ gridColumn: 2 }} $center><Icon n="expand" s={13} /></CaseCell>
                  <CaseCell style={{ gridColumn: 3 }} $center><Icon n={c.bs} s={16} /></CaseCell>
                  <CaseCell style={{ gridColumn: 4 }}>{c.raum}</CaseCell>
                  <CaseCell style={{ gridColumn: 5 }} $center><Icon n={c.mo} s={15} /></CaseCell>
                  <CaseCell style={{ gridColumn: 6 }} $pad={c.vip ? 2 : c.extra ? 3 : 2}>
                    {c.vip && <Vip>VIP</Vip>}
                    {c.extra && <Icon n="people" s={16} />}
                    <Blur w={c.w} h={14} seed={c.seed} />
                  </CaseCell>
                  <CaseCell style={{ gridColumn: 7 }} $pad={2}>{c.alter}</CaseCell>
                  <CaseCell style={{ gridColumn: 8 }} $center><Icon n={c.female ? 'female' : 'male'} s={14} /></CaseCell>
                  <CaseDept $c={c.dc}>{c.d}</CaseDept>
                  <CaseCell style={{ gridColumn: 10, justifyContent: 'flex-end', paddingRight: 1, gap: 2 }}>
                    {c.doc && <Icon n="sil" s={13} />}
                    <Icon n="okc" s={16} />
                  </CaseCell>
                  {c.ca && <CaseCell style={{ gridColumn: 12 }} $pad={1}><Icon n="exbox" s={15} /></CaseCell>}
                  <CaseTime $a={c.a} $b={c.b} $ink={c.ink} $bold={c.bold}>{c.t}</CaseTime>
                  <CaseCell style={{ gridColumn: 14, gap: 1 }} $pad={3}>
                    {c.icons?.map((n) => <Icon key={n} n={n} s={14} />)}
                  </CaseCell>
                  <CaseNote>{c.note}</CaseNote>
                  <CaseRule />
                </CaseRow>
              ))}
            </BodyMain>
            <VScroll top={93} len={140} />
          </BodyRegion>
        </PanelBody>

        <PanelBody style={{ flex: '0 0 279px', borderTop: '1px solid #7f9bd6' }}>
          <Toolbar $h={27} style={{ gap: 8 }}>
            <Chip $wide={126} style={{ fontSize: 12 }}><Icon n="talk" s={20} />Pflege Todos</Chip>
            <Refresh />
            <Icon n="clip" s={22} off />
            <Icon n="okyellow" s={22} />
            <span style={{ margin: '0 3px 0 -7px' }}>Erledigen</span>
            <Icon n="stopyellow" s={24} />
            <span style={{ marginLeft: -7, letterSpacing: '.2px' }}>Nicht durchgeführt</span>
            <Fill />
            <Icon n="doctarget" s={22} />
            <Counter style={{ margin: '0 4px 0 -8px', letterSpacing: 0 }}><RedCount>4</RedCount>/47</Counter>
            <Icon n="down" s={24} />
            <MinBtn />
          </Toolbar>
          <ParamLine $h={39} $dim style={{ lineHeight: '16px' }}>
            Parameter: Suche von <b>10.09.2018 - 30.03.2019</b>, ACH-NOT,AUG-NOT,DER-NOT,GYN-NOT,HNO-NOT,KIN-NOT,ME1-NOT,ME2-NOT,RAD-NOT,UCO-NOT,URO-NOT
          </ParamLine>
          <TodoArea>
            <HeadRow $cols={todoCols} $h={19}>
              <HeadCell style={{ paddingLeft: 3 }}><Icon n="gear" s={15} /></HeadCell>
              <HeadCell style={{ paddingLeft: 3 }}>Dri...</HeadCell>
              <HeadCell>Patient</HeadCell>
              <HeadCell>Raum</HeadCell>
              <HeadCell>Art</HeadCell>
              <HeadCell>ToDo</HeadCell>
              <HeadCell>Wann</HeadCell>
              <HeadCell />
              <HeadCell />
              <HeadCell />
            </HeadRow>
            <BodyRegion $h={186}>
              <BodyMain style={{ display: 'flex', flexDirection: 'column' }}>
                <TodoRow $bg="#cfcfcf" $h={26}>
                  <span />
                  <TodoCell $center><Icon n="flago" s={24} /></TodoCell>
                  <TodoCell><Blur w={100} h={13} seed={110} /></TodoCell>
                  <TodoCell>U02</TodoCell>
                  <TodoCell $center><Icon n="monitor" s={15} /></TodoCell>
                  <TodoCell>Monitoring (komplett)</TodoCell>
                  <TodoCell>17:56</TodoCell>
                  <TodoCell>AWPHI</TodoCell>
                  <TodoCell>ACH-NOT</TodoCell>
                  <TodoCell $center><Icon n="docblue" s={15} /></TodoCell>
                </TodoRow>
                <TodoRow $bg="#fff" $h={35}>
                  <TodoGutter $c="#f0f0f0" />
                  <TodoCell $top />
                  <TodoCell $top><Blur w={100} h={13} seed={111} /></TodoCell>
                  <TodoCell $top>GIPS</TodoCell>
                  <TodoCell $top $center><Icon n="stetho" s={16} /></TodoCell>
                  <TodoCell $top>{'12 Kanal EKG mit\nrechtsventrikulären Ableitungen'}</TodoCell>
                  <TodoCell $top>28.03.2019 14:02</TodoCell>
                  <TodoCell $top>AWPHI</TodoCell>
                  <TodoCell $top>ACH-NOT</TodoCell>
                  <TodoCell $top $center><Icon n="docblue" s={15} /></TodoCell>
                </TodoRow>
                {[
                  { bg: YEL, a: 'tube', t: 'Venöse BGA', s: 112 },
                  { bg: '#fff', a: 'tube', t: 'Basislabor', s: 113 },
                  { bg: YEL, a: 'stetho', t: '12 Kanal EKG', s: 114 },
                ].map((r) => (
                  <TodoRow key={r.t} $bg={r.bg} $h={20}>
                    <TodoGutter $c="#f0f0f0" />
                    <TodoCell />
                    <TodoCell><Blur w={100} h={13} seed={r.s} /></TodoCell>
                    <TodoCell>U02</TodoCell>
                    <TodoCell $center><Icon n={r.a} s={16} /></TodoCell>
                    <TodoCell>{r.t}</TodoCell>
                    <TodoCell>17:56</TodoCell>
                    <TodoCell>AWPHI</TodoCell>
                    <TodoCell>ACH-NOT</TodoCell>
                    <TodoCell $center><Icon n="docblue" s={15} /></TodoCell>
                  </TodoRow>
                ))}
                <TodoFill />
              </BodyMain>
              <VScroll />
            </BodyRegion>
          </TodoArea>
          <Tip>
            Parameter: Suche von <b>10.09.2018 - 30.03.2019</b>, ACH-NOT,AUG-NOT,DER-NOT,GYN-NOT,HNO-NOT,KIN-NOT,ME1-NOT,ME2-NOT,RAD-NOT,UCO-NOT,URO-NOT
          </Tip>
        </PanelBody>

        <PanelBody style={{ borderTop: '1px solid #7f9bd6' }}>
          <Toolbar $h={28} style={{ gap: 7 }}>
            <Chip $wide={112} style={{ fontSize: 12 }}><Icon n="pencil" s={24} />Blackboard</Chip>
            <Icon n="pencil" s={24} />
            <Fill />
            <MinBtn />
          </Toolbar>
          <BoardArea>
            <BoardMain>
              <BoardRow $head><BoardCell>Mitarbeiter</BoardCell><BoardCell>Bemerkung</BoardCell></BoardRow>
              <BoardRow><BoardCell><Blur w={70} h={15} seed={120} /></BoardCell><BoardCell $rule>- 1234 (OÄ)</BoardCell></BoardRow>
              <BoardRow $dark><BoardCell><Blur w={92} h={15} seed={121} /></BoardCell><BoardCell $rule>- 4587 (ltd. Hebamme)</BoardCell></BoardRow>
              <BoardRow><BoardCell><Blur w={98} h={15} seed={122} /></BoardCell><BoardCell $rule>- 4711 (Ärztin)</BoardCell></BoardRow>
              <BoardRow $dark><BoardCell><Blur w={110} h={15} seed={123} /></BoardCell><BoardCell $rule>- 0815 (Hebamme)</BoardCell></BoardRow>
              <BoardNote style={{ marginTop: 9 }}>Kinderklinik nur nach Rücksprache!</BoardNote>
              <BoardNote style={{ marginTop: 18 }}>CT abgemeldet (ca. 2 Stunden)</BoardNote>
            </BoardMain>
            <VScroll top={0} len={110} />
          </BoardArea>
        </PanelBody>
      </RightCol>
    </Shell>
  </>
);

export default App;
